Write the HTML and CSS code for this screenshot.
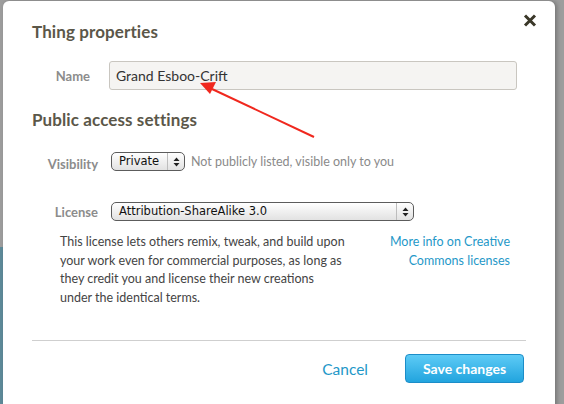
FILE: index.html
```html
<!DOCTYPE html>
<html>
<head>
<meta charset="utf-8">
<link rel="stylesheet" href="styles.css">
</head>
<body>
<div class="modal">
  <div class="header">
    <h2 class="title">Thing properties</h2>
    <svg class="close" width="14" height="13" viewBox="0 0 14 13"><path d="M2 1.5L12 11.5M12 1.5L2 11.5" stroke="#3b3829" stroke-width="3" stroke-linecap="butt"/></svg>
  </div>
  <div class="row name-row">
    <label class="label name-label">Name</label>
    <div class="input">Grand Esboo-Crift</div>
  </div>
  <h2 class="title section">Public access settings</h2>
  <div class="row vis-row">
    <label class="label">Visibility</label>
    <div class="select small"><span class="sel-text">Private</span><span class="sel-arrow"><svg width="7" height="10" viewBox="0 0 7 10"><path d="M3.5 0.5L6.5 4H0.5Z M3.5 9.5L6.5 6H0.5Z" fill="#222"/></svg></span></div>
    <span class="hint">Not publicly listed, visible only to you</span>
  </div>
  <div class="row lic-row">
    <label class="label">License</label>
    <div class="select wide"><span class="sel-text">Attribution-ShareAlike 3.0</span><span class="sel-arrow"><svg width="7" height="10" viewBox="0 0 7 10"><path d="M3.5 0.5L6.5 4H0.5Z M3.5 9.5L6.5 6H0.5Z" fill="#222"/></svg></span></div>
  </div>
  <div class="desc">
    <p class="desc-text">This license lets others remix, tweak, and build upon your work even for commercial purposes, as long as they credit you and license their new creations under the identical terms.</p>
    <a class="more">More info on Creative<br>Commons licenses</a>
  </div>
  <hr class="divider">
  <div class="footer">
    <a class="cancel">Cancel</a>
    <button class="save">Save changes</button>
  </div>
  <svg class="arrow" width="564" height="404" viewBox="0 0 564 404">
    <line x1="314" y1="137" x2="212" y2="89" stroke="#f0281e" stroke-width="2"/>
    <path d="M200 83L216 82L210 94Z" fill="#f0281e"/>
  </svg>
</div>
</body>
</html>
```

FILE: styles.css
```css
html, body {
  margin: 0;
  padding: 0;
}
body {
  width: 564px;
  height: 404px;
  overflow: hidden;
  background: linear-gradient(#5e8a99, #5e8a99) 0 247px / 3px 100% no-repeat, #9d9d9d;
  padding: 1px 0 0 3px;
  box-sizing: border-box;
  font-family: Lato, "Open Sans", sans-serif;
}
.modal {
  position: relative;
  width: 552px;
  height: 420px;
  background: #fff;
  border-radius: 6px;
  box-shadow: 2px 0 4px rgba(0,0,0,0.25);
  padding: 0 29px;
  box-sizing: border-box;
}
.header {
  display: flex;
  justify-content: space-between;
  align-items: flex-start;
  padding-top: 20px;
}
.title {
  margin: 0;
  font-size: 17px;
  font-weight: 700;
  color: #5b5749;
  line-height: 22px;
  letter-spacing: 0.1px;
}
.close {
  margin-top: -7px;
  margin-right: -11px;
}
.row {
  display: flex;
  align-items: center;
}
.label {
  font-size: 13px;
  font-weight: 700;
  color: #8c8c8c;
  text-align: right;
}
.name-row {
  margin-top: 18px;
}
.name-label {
  width: 58px;
  margin-right: 19px;
}
.input {
  width: 408px;
  height: 29px;
  box-sizing: border-box;
  border: 1px solid #c9c6c0;
  border-radius: 3px;
  background: #f5f4f2;
  font-size: 14px;
  color: #333;
  line-height: 27px;
  padding-left: 6px;
}
.section {
  margin-top: 19px;
}
.vis-row {
  margin-top: 21px;
}
.vis-row .label, .lic-row .label {
  width: 66px;
  margin-right: 13px;
  position: relative;
  top: 2px;
}
.lic-row .label {
  top: 0;
}
.select {
  display: flex;
  height: 19px;
  box-sizing: border-box;
  border: 1px solid #5c5c5c;
  border-radius: 5px;
  background: linear-gradient(#ffffff, #f0f0f0 50%, #e2e2e2);
  font-family: "DejaVu Sans", "Liberation Sans", sans-serif;
  font-size: 11.5px;
  color: #111;
  line-height: 17px;
}
.sel-text {
  flex: 1;
  padding-left: 7px;
}
.sel-arrow {
  width: 16px;
  border-left: 1px solid #bdbdbd;
  display: flex;
  align-items: center;
  justify-content: center;
}
.small {
  width: 74px;
}
.wide {
  width: 303px;
}
.hint {
  margin-left: 6px;
  font-size: 12.5px;
  color: #8a8a8a;
}
.lic-row {
  margin-top: 31px;
}
.desc {
  display: flex;
  justify-content: space-between;
  margin: 12px 16px 0 28px;
}
.desc-text {
  margin: 0;
  width: 285px;
  font-size: 12.5px;
  line-height: 18.5px;
  color: #444;
}
.more {
  font-size: 12.5px;
  line-height: 18.5px;
  color: #1f98c8;
  text-align: right;
}
.divider {
  border: 0;
  border-top: 1px solid #cfcfcf;
  margin: 33px 0 0 0;
}
.footer {
  display: flex;
  justify-content: flex-end;
  align-items: center;
  margin-top: 13px;
  padding-right: 2px;
}
.cancel {
  font-size: 15.5px;
  color: #1f98c8;
  margin-right: 37px;
}
.save {
  width: 119px;
  height: 29px;
  border: 1px solid #1c8dc8;
  border-radius: 4px;
  background: linear-gradient(#5dcbf6, #22a4de);
  color: #fff;
  font-family: Lato, sans-serif;
  font-weight: 700;
  font-size: 14px;
  padding: 0;
}
.arrow {
  position: absolute;
  left: -3px;
  top: -1px;
  pointer-events: none;
}
```
